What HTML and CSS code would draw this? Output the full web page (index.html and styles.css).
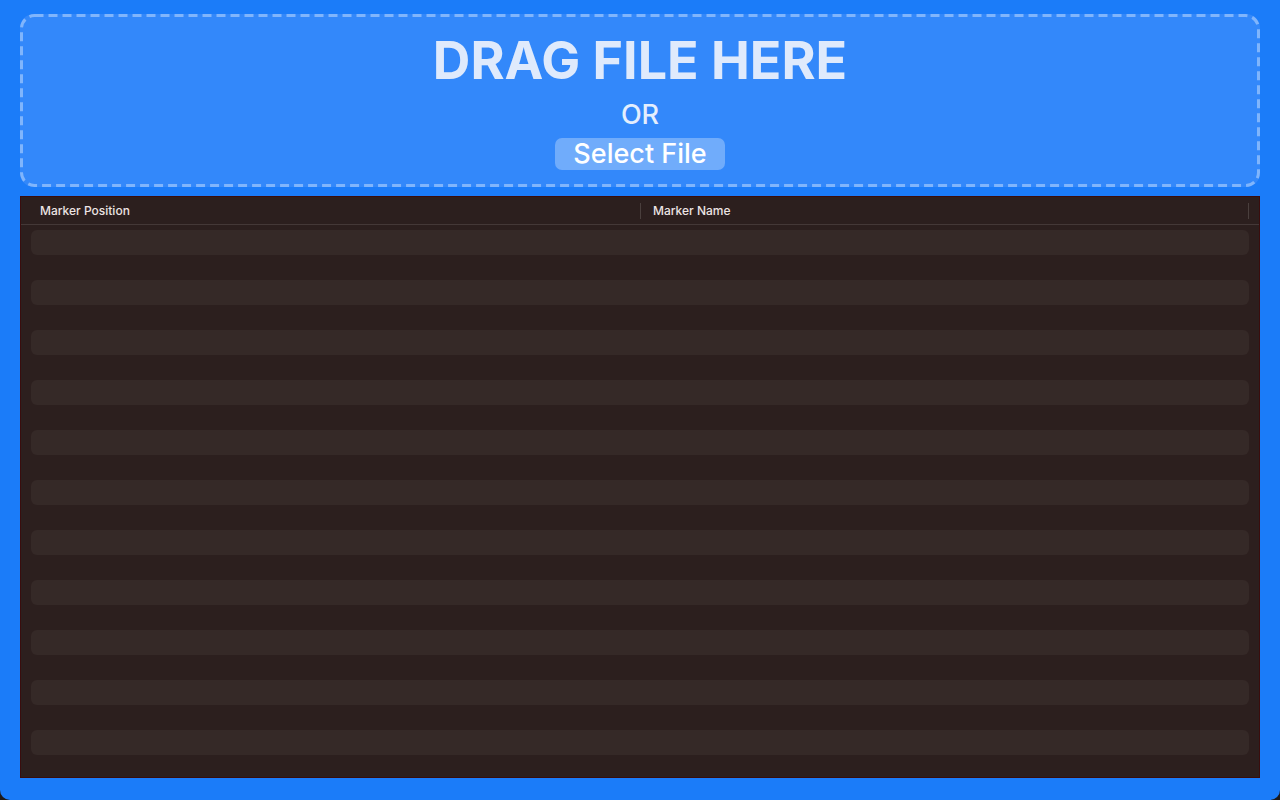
FILE: index.html
```html
<!DOCTYPE html>
<html lang="en">
<head>
<meta charset="utf-8">
<title>Markers</title>
<link rel="stylesheet" href="styles.css">
</head>
<body>
<div class="window">
  <section class="dropzone">
    <svg class="dash" aria-hidden="true"><rect class="dash-rect"></rect></svg>
    <h1 class="drop-title">DRAG FILE HERE</h1>
    <div class="drop-or">OR</div>
    <button class="select-btn">Select File</button>
  </section>
  <section class="table">
    <div class="thead">
      <div class="th">Marker Position</div>
      <div class="th th-name">Marker Name</div>
    </div>
    <div class="tbody">
      <div class="stripe"></div>
      <div class="stripe"></div>
      <div class="stripe"></div>
      <div class="stripe"></div>
      <div class="stripe"></div>
      <div class="stripe"></div>
      <div class="stripe"></div>
      <div class="stripe"></div>
      <div class="stripe"></div>
      <div class="stripe"></div>
      <div class="stripe"></div>
    </div>
  </section>
</div>
</body>
</html>
```

FILE: styles.css
```css
html {
  background: #1e1a1a;
}
body {
  margin: 0;
  width: 1280px;
  height: 800px;
  overflow: hidden;
  font-family: Inter, "Liberation Sans", sans-serif;
}
.window {
  box-sizing: border-box;
  width: 1280px;
  height: 800px;
  background: #1b7cf9;
  border-radius: 0 0 10px 10px;
  padding: 14px 20px 22px 20px;
  display: flex;
  flex-direction: column;
  gap: 9px;
}
.dropzone {
  position: relative;
  box-sizing: border-box;
  height: 173px;
  flex: none;
  background: #3388fa;
  border-radius: 14px;
  display: flex;
  flex-direction: column;
  align-items: center;
  padding-top: 21px;
}
.dash {
  position: absolute;
  inset: 0;
  width: 100%;
  height: 100%;
  pointer-events: none;
}
.dash-rect {
  x: 1.5px;
  y: 1.5px;
  width: calc(100% - 3px);
  height: calc(100% - 3px);
  rx: 13px;
  ry: 13px;
  fill: none;
  stroke: rgba(255, 255, 255, 0.38);
  stroke-width: 3px;
  stroke-dasharray: 9 5;
}
.drop-title {
  margin: 0;
  font-size: 52px;
  line-height: 52px;
  font-weight: 700;
  color: #dfeafc;
  letter-spacing: 0;
}
.drop-or {
  margin-top: 14px;
  font-size: 27px;
  line-height: 27px;
  font-weight: 500;
  color: #e4eefd;
}
.select-btn {
  margin-top: 10px;
  height: 32px;
  width: 170px;
  border: none;
  border-radius: 7px;
  background: rgba(255, 255, 255, 0.3);
  color: #ffffff;
  font-family: Inter, "Liberation Sans", sans-serif;
  font-size: 27px;
  line-height: 32px;
  font-weight: 500;
  padding: 0;
}
.table {
  flex: 1;
  box-sizing: border-box;
  background: #2c1f1e;
  border: 1px solid #3a0d0d;
  display: flex;
  flex-direction: column;
}
.thead {
  height: 27px;
  flex: none;
  display: grid;
  grid-template-columns: 620px 1fr;
  border-bottom: 1px solid #443837;
  align-items: center;
  padding-right: 10px;
}
.th {
  font-size: 12px;
  font-weight: 500;
  color: #ece4e3;
  padding-left: 19px;
  border-right: 1px solid #4a3f3d;
  line-height: 16px;
}
.th-name {
  padding-left: 12px;
}
.tbody {
  display: flex;
  flex-direction: column;
  gap: 25px;
  padding: 5px 10px 0 10px;
}
.stripe {
  height: 25px;
  border-radius: 6px;
  background: #352927;
}
```
